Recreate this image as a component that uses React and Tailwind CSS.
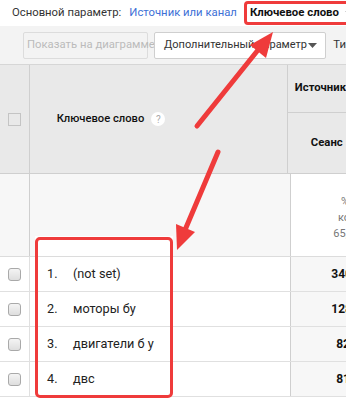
import React from 'react';

const rows = [
  { n: '1.', label: '(not set)', value: '340' },
  { n: '2.', label: 'моторы бу', value: '128' },
  { n: '3.', label: 'двигатели б у', value: '82' },
  { n: '4.', label: 'двс', value: '81' },
];

const Checkbox = () => (
  <span className="block w-[13px] h-[13px] rounded-[3px] border border-[#a9a9a9] bg-gradient-to-b from-[#f4f4f4] to-[#dedede]" />
);

const Caret = ({ className }) => (
  <svg width="9" height="5" viewBox="0 0 9 5" className={className}>
    <path d="M0 0h9L4.5 5z" fill="currentColor" />
  </svg>
);

const App = () => {
  return (
    <div className="relative w-[346px] h-[399px] overflow-hidden bg-white font-['Roboto',sans-serif] text-[11.3px] text-[#222]">
      {/* primary dimension bar */}
      <div className="flex items-center h-[26px] pl-[12px] whitespace-nowrap">
        <span className="text-[#333]">Основной параметр:</span>
        <span className="ml-[8px] text-[#3c6fd6]">Источник или канал</span>
        <span className="ml-[7px] flex items-center h-[24px] pl-[3px] pr-[20px] border-[3px] border-[#ef3b3b] rounded-[4px] bg-white">
          <span className="font-bold text-[#111] text-[11.4px]">Ключевое слово</span>
          <Caret className="ml-[6px] text-[#aaa]" />
        </span>
      </div>

      {/* toolbar */}
      <div className="flex items-center gap-[6px] h-[39px] pl-[23px] bg-[#f3f3f3] border-b border-[#d6d6d6] whitespace-nowrap">
        <div className="flex items-center h-[27px] w-[125px] px-[3px] rounded-[2px] border border-[#dcdcdc] text-[#bbb]">
          Показать на диаграмме
        </div>
        <div className="flex items-center justify-between h-[27px] w-[175px] pl-[9px] pr-[8px] rounded-[2px] border border-[#cfcfcf] bg-white text-[#333] text-[11px]">
          <span>Дополнительный параметр</span>
          <Caret className="text-[#555]" />
        </div>
        <span className="ml-[1px] text-[#333]">Ти</span>
      </div>

      {/* table */}
      <div className="flex flex-col">
        {/* header */}
        <div className="flex h-[109px] bg-[#e9e9e9] border-b border-[#cfcfcf]">
          <div className="w-[30px] flex items-center justify-center border-r border-[#cfcfcf]">
            <span className="block w-[13px] h-[13px] border border-[#c4c4c4]" />
          </div>
          <div className="w-[261px] flex items-center pl-[27px] border-r border-[#cfcfcf]">
            <span className="font-medium text-[#111] text-[11.2px]">Ключевое слово</span>
            <span className="ml-[7px] flex items-center justify-center w-[14px] h-[14px] rounded-full bg-white text-[10px] text-[#aaa]">?</span>
          </div>
          <div className="flex-1 flex flex-col">
            <div className="h-[48px] flex items-center pl-[7px] border-b border-[#cfcfcf] font-bold text-[#111] whitespace-nowrap">
              Источник
            </div>
            <div className="flex-1 flex items-center pl-[23px] font-bold text-[#111] whitespace-nowrap">Сеанс</div>
          </div>
        </div>

        {/* summary */}
        <div className="flex h-[83px] bg-[#f7f7f7] border-b border-[#dcdcdc]">
          <div className="w-[30px] border-r border-[#cfcfcf]" />
          <div className="w-[261px] border-r border-[#cfcfcf] flex items-end pl-[5px]">
            <div className="w-[138px] h-[20px] bg-white" />
          </div>
          <div className="flex-1 bg-white flex flex-col items-end justify-center pt-[6px] leading-[16px] text-[11px] text-[#777] whitespace-nowrap">
            <span className="mr-[-3px]">% </span>
            <span className="mr-[-4px]">ко</span>
            <span className="mr-[-8px]">65,4</span>
          </div>
        </div>

        {/* rows */}
        {rows.map((r) => (
          <div key={r.n} className="flex h-[35px] border-b border-[#e0e0e0]">
            <div className="w-[30px] flex items-center justify-center border-r border-[#e0e0e0]">
              <Checkbox />
            </div>
            <div className="w-[261px] flex items-center pl-[17px] border-r border-[#cfcfcf] text-[12.7px] text-[#222]">
              <span className="w-[26px]">{r.n}</span>
              <span>{r.label}</span>
            </div>
            <div className="flex-1 flex items-center justify-end bg-[#f7f7f7] font-bold text-[#111] text-[12px] whitespace-nowrap">
              <span className={r.value.length === 3 ? 'mr-[-6px]' : 'mr-[-4px]'}>{r.value}</span>
            </div>
          </div>
        ))}
      </div>

      {/* highlight box */}
      <div className="absolute left-[35px] top-[237px] w-[138px] h-[161px] border-[3px] border-[#ef3b3b] rounded-[5px] pointer-events-none" />

      {/* arrows */}
      <svg className="absolute inset-0 pointer-events-none" width="346" height="399" viewBox="0 0 346 399">
        <line x1="197" y1="126" x2="258" y2="50" stroke="#ef3b3b" strokeWidth="5" strokeLinecap="round" />
        <path d="M273 32 L266 58 L250 45 Z" fill="#ef3b3b" />
        <line x1="218" y1="152" x2="185" y2="230" stroke="#ef3b3b" strokeWidth="5" strokeLinecap="round" />
        <path d="M177 250 L176 224 L195 232 Z" fill="#ef3b3b" />
      </svg>
    </div>
  );
};

export default App;
